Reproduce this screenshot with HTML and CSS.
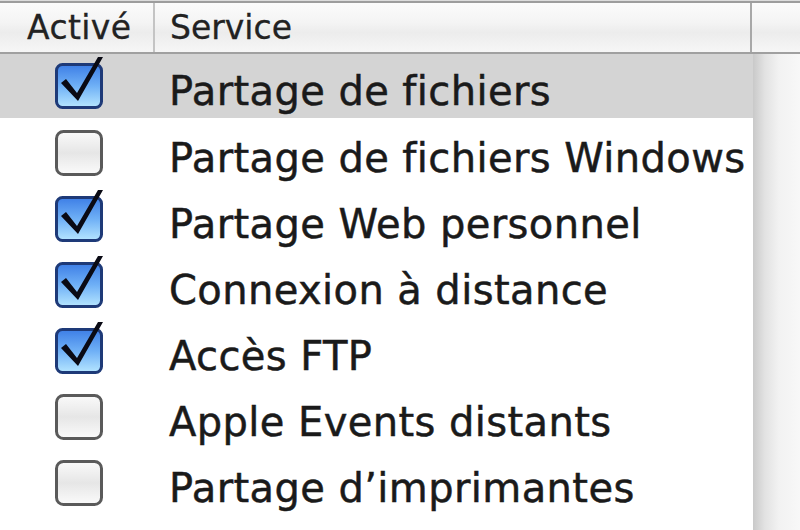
FILE: index.html
```html
<!DOCTYPE html>
<html lang="fr">
<head>
<meta charset="utf-8">
<title>Services</title>
<link rel="stylesheet" href="styles.css">
</head>
<body>
<div class="table">
  <div class="header">
    <div class="hcell hcell-active">Activé</div>
    <div class="hcell hcell-service">Service</div>
    <div class="hcell hcell-corner"></div>
  </div>
  <div class="body">
    <div class="rows">
      <div class="row selected">
        <div class="cell-check"><svg class="cb cb-on" viewBox="0 0 48 46" width="48" height="46"><defs><linearGradient id="g1" x1="0" y1="0" x2="0" y2="1"><stop offset="0" stop-color="#3d7ee6"/><stop offset="0.5" stop-color="#6fb0f6"/><stop offset="1" stop-color="#b6e6ff"/></linearGradient></defs><rect x="1.5" y="1.5" width="45" height="43" rx="6" fill="url(#g1)" stroke="#1e3a78" stroke-width="3"/><path d="M6 20 L23 38 L48 -6 L43 -6 L22 30 L11 16 Z" fill="#0a0a14"/></svg></div>
        <div class="cell-name">Partage de fichiers</div>
      </div>
      <div class="row">
        <div class="cell-check"><svg class="cb" viewBox="0 0 48 46" width="48" height="46"><defs><linearGradient id="g0" x1="0" y1="0" x2="0" y2="1"><stop offset="0" stop-color="#fafafa"/><stop offset="0.5" stop-color="#e6e6e6"/><stop offset="1" stop-color="#fbfbfb"/></linearGradient></defs><rect x="1.5" y="1.5" width="45" height="43" rx="7" fill="url(#g0)" stroke="#5a5a5a" stroke-width="3"/></svg></div>
        <div class="cell-name">Partage de fichiers Windows</div>
      </div>
      <div class="row">
        <div class="cell-check"><svg class="cb cb-on" viewBox="0 0 48 46" width="48" height="46"><rect x="1.5" y="1.5" width="45" height="43" rx="6" fill="url(#g1)" stroke="#1e3a78" stroke-width="3"/><path d="M6 20 L23 38 L48 -6 L43 -6 L22 30 L11 16 Z" fill="#0a0a14"/></svg></div>
        <div class="cell-name">Partage Web personnel</div>
      </div>
      <div class="row">
        <div class="cell-check"><svg class="cb cb-on" viewBox="0 0 48 46" width="48" height="46"><rect x="1.5" y="1.5" width="45" height="43" rx="6" fill="url(#g1)" stroke="#1e3a78" stroke-width="3"/><path d="M6 20 L23 38 L48 -6 L43 -6 L22 30 L11 16 Z" fill="#0a0a14"/></svg></div>
        <div class="cell-name">Connexion à distance</div>
      </div>
      <div class="row">
        <div class="cell-check"><svg class="cb cb-on" viewBox="0 0 48 46" width="48" height="46"><rect x="1.5" y="1.5" width="45" height="43" rx="6" fill="url(#g1)" stroke="#1e3a78" stroke-width="3"/><path d="M6 20 L23 38 L48 -6 L43 -6 L22 30 L11 16 Z" fill="#0a0a14"/></svg></div>
        <div class="cell-name">Accès FTP</div>
      </div>
      <div class="row">
        <div class="cell-check"><svg class="cb" viewBox="0 0 48 46" width="48" height="46"><rect x="1.5" y="1.5" width="45" height="43" rx="7" fill="url(#g0)" stroke="#5a5a5a" stroke-width="3"/></svg></div>
        <div class="cell-name">Apple Events distants</div>
      </div>
      <div class="row">
        <div class="cell-check"><svg class="cb" viewBox="0 0 48 46" width="48" height="46"><rect x="1.5" y="1.5" width="45" height="43" rx="7" fill="url(#g0)" stroke="#5a5a5a" stroke-width="3"/></svg></div>
        <div class="cell-name">Partage d’imprimantes</div>
      </div>
    </div>
    <div class="scroll"></div>
  </div>
</div>
</body>
</html>
```

FILE: styles.css
```css
html, body {
  margin: 0;
  padding: 0;
  background: #ffffff;
}
body {
  width: 800px;
  height: 530px;
  overflow: hidden;
  font-family: "DejaVu Sans", "Liberation Sans", sans-serif;
  color: #1a1a1a;
}
.table {
  display: flex;
  flex-direction: column;
  height: 530px;
}
.header {
  display: flex;
  height: 49px;
  border-top: 2px solid #9d9d9d;
  border-bottom: 2px solid #a0a0a0;
  margin-top: 1px;
  background: linear-gradient(#fbfbfb 0%, #f4f4f4 40%, #ececec 60%, #f6f6f6 100%);
  box-shadow: 0 -1px 0 #dcdcdc;
}
.hcell {
  display: flex;
  align-items: center;
  font-size: 33px;
  color: #222;
  -webkit-text-stroke: 0.3px #222;
}
.hcell-active {
  width: 155px;
  padding-left: 27px;
  box-sizing: border-box;
  border-right: 2px solid #c4c4c4;
  letter-spacing: 0.4px;
}
.hcell-service {
  width: 597px;
  padding-left: 15px;
  box-sizing: border-box;
  border-right: 2px solid #a8a8a8;
}
.hcell-corner {
  flex: 1;
}
.body {
  display: flex;
  flex: 1;
}
.rows {
  width: 753px;
  display: flex;
  flex-direction: column;
}
.row {
  display: flex;
  align-items: center;
  height: 66px;
}
.row.selected {
  background: #d4d4d4;
  height: 64px;
  margin-bottom: 2px;
}
.cell-check {
  width: 155px;
  display: flex;
  padding-left: 55px;
  box-sizing: border-box;
}
.cb {
  overflow: visible;
  display: block;
}
.cell-name {
  font-size: 40px;
  letter-spacing: 0.4px;
  padding-left: 14px;
  padding-top: 10px;
  white-space: nowrap;
  -webkit-text-stroke: 0.5px #1a1a1a;
}
.scroll {
  flex: 1;
  background: linear-gradient(to right, #c9c9c9 0%, #e2e2e2 25%, #f2f2f2 55%, #f8f8f8 100%);
}
```
